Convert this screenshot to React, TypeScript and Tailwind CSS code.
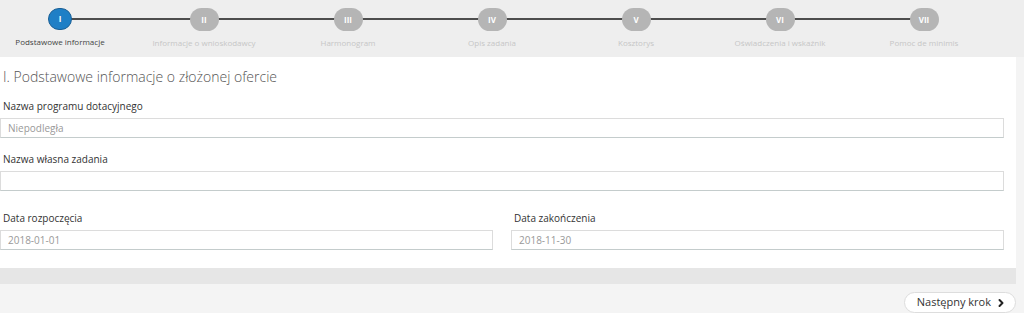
import { ChevronRight } from "lucide-react";

const steps = [
  { n: "I", label: "Podstawowe informacje" },
  { n: "II", label: "Informacje o wnioskodawcy" },
  { n: "III", label: "Harmonogram" },
  { n: "IV", label: "Opis zadania" },
  { n: "V", label: "Kosztorys" },
  { n: "VI", label: "Oświadczenia i wskaźnik" },
  { n: "VII", label: "Pomoc de minimis" },
];

function Field({ label, value }: { label: string; value?: string }) {
  return (
    <div className="flex flex-col">
      <label className="pl-[3px] text-[10px] leading-4 text-[#333]">{label}</label>
      <div className="mt-1 flex h-[20px] items-center border border-[#dcdcdc] border-b-[#c4cccc] pl-[7px] text-[10px] text-[#999]">
        {value}
      </div>
    </div>
  );
}

export default function App() {
  return (
    <div
      className="h-[313px] w-full overflow-hidden bg-[#f4f4f4]"
      style={{ fontFamily: '"Open Sans", "Liberation Sans", sans-serif' }}
    >
      {/* Stepper */}
      <div className="relative h-[57px] bg-[#eeeeee]">
        <div className="absolute left-[60px] top-[18px] h-[2px] w-[864px] bg-[#4d4d4d]" />
        <div className="relative -ml-3 grid w-[1008px] grid-cols-7">
          {steps.map((s, i) => (
            <div key={s.n} className="flex flex-col items-center pt-[8px]">
              <div
                className={
                  i === 0
                    ? "flex h-[22px] w-6 items-center justify-center rounded-full border border-[#1a5f95] bg-[#1f7fc6] text-[8px] font-bold text-white"
                    : "flex h-[23px] w-[29px] items-center justify-center rounded-full bg-[#b5b5b5] text-[8px] font-bold text-white"
                }
              >
                {s.n}
              </div>
              <div
                className={
                  i === 0
                    ? "mt-[6px] text-[8px] leading-3 text-[#444]"
                    : "mt-[6px] text-[8px] leading-3 text-[#c6c6c6]"
                }
              >
                {s.label}
              </div>
            </div>
          ))}
        </div>
      </div>

      {/* Panel */}
      <div className="mr-2 bg-white pb-[18px] pr-3 pt-[10px]">
        <h2 className="pl-[3px] text-[14px] font-light leading-5 text-[#555]">
          I. Podstawowe informacje o złożonej ofercie
        </h2>
        <div className="mt-[11px]">
          <Field label="Nazwa programu dotacyjnego" value="Niepodległa" />
        </div>
        <div className="mt-[13px]">
          <Field label="Nazwa własna zadania" />
        </div>
        <div className="mt-[19px] grid grid-cols-2 gap-x-[18px]">
          <Field label="Data rozpoczęcia" value="2018-01-01" />
          <Field label="Data zakończenia" value="2018-11-30" />
        </div>
      </div>
      <div className="mr-2 h-[16px] bg-[#e6e6e6]" />

      {/* Footer */}
      <div className="mr-2 mt-[8px] flex justify-end">
        <button className="flex h-[21px] items-center gap-1 rounded-full border border-[#dddddd] bg-white pl-3 pr-2 text-[11px] text-[#333]">
          Następny krok
          <ChevronRight size={12} strokeWidth={4} className="text-[#222]" />
        </button>
      </div>
    </div>
  );
}
